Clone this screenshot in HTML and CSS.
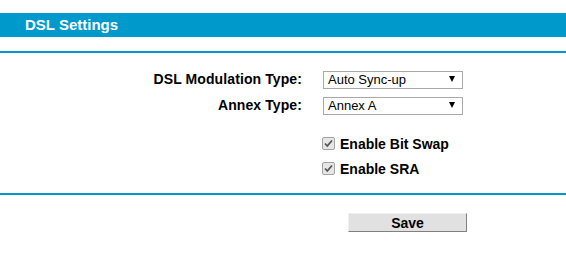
FILE: index.html
```html
<!DOCTYPE html>
<html lang="en">
<head>
  <meta charset="UTF-8">
  <title>DSL Settings</title>
  <link rel="stylesheet" href="styles.css">
</head>
<body>
  <div class="title-bar">DSL Settings</div>
  <div class="divider"></div>

  <form class="settings">
    <label class="field-label" for="modulation">DSL Modulation Type:</label>
    <div class="select-wrap">
      <select id="modulation">
        <option>Auto Sync-up</option>
        <option>ADSL2+</option>
        <option>ADSL2</option>
        <option>G.DMT</option>
        <option>T1.413</option>
      </select>
    </div>

    <label class="field-label" for="annex">Annex Type:</label>
    <div class="select-wrap">
      <select id="annex">
        <option>Annex A</option>
        <option>Annex L</option>
        <option>Annex M</option>
      </select>
    </div>

    <div class="check-list">
      <label class="check-row">
        <span class="check-box">
          <svg width="11" height="11" viewBox="0 0 11 11"><path d="M2 5.5 L4.3 8 L9 2.5" fill="none" stroke="#555" stroke-width="1.8"/></svg>
        </span>
        Enable Bit Swap
      </label>
      <label class="check-row">
        <span class="check-box">
          <svg width="11" height="11" viewBox="0 0 11 11"><path d="M2 5.5 L4.3 8 L9 2.5" fill="none" stroke="#555" stroke-width="1.8"/></svg>
        </span>
        Enable SRA
      </label>
    </div>
  </form>

  <div class="divider bottom"></div>

  <div class="actions">
    <button type="button" class="save-btn">Save</button>
  </div>
</body>
</html>
```

FILE: styles.css
```css
body {
  margin: 0;
  font-family: "Liberation Sans", Arial, sans-serif;
  color: #000;
  background: #fff;
}

.title-bar {
  margin-top: 13px;
  height: 24px;
  line-height: 24px;
  padding-left: 25px;
  background-color: #0099cc;
  color: #fff;
  font-size: 15px;
  font-weight: bold;
}

.divider {
  margin-top: 14px;
  height: 2px;
  background-color: #0099cc;
}

.divider.bottom {
  margin-top: 12px;
}

.settings {
  display: grid;
  grid-template-columns: 302px 140px;
  column-gap: 21px;
  row-gap: 8px;
  align-items: center;
  padding-top: 17px;
}

.field-label {
  text-align: right;
  font-size: 14px;
  font-weight: bold;
  letter-spacing: 0.1px;
}

.select-wrap {
  position: relative;
  height: 18px;
}

.select-wrap select {
  appearance: none;
  -webkit-appearance: none;
  box-sizing: border-box;
  width: 140px;
  height: 18px;
  margin: 0;
  padding: 0 0 0 4px;
  border: 1px solid #a9a9a9;
  border-radius: 0;
  background: #fff;
  font-family: "Liberation Sans", Arial, sans-serif;
  font-size: 13px;
  color: #000;
}

.select-wrap::after {
  content: "";
  position: absolute;
  right: 8px;
  top: 6px;
  border-left: 3px solid transparent;
  border-right: 3px solid transparent;
  border-top: 6px solid #000;
  pointer-events: none;
}

.check-list {
  grid-column: 2;
  margin-top: 9px;
}

.check-row {
  display: flex;
  align-items: center;
  height: 25px;
  font-size: 14px;
  font-weight: bold;
  white-space: nowrap;
}

.check-box {
  box-sizing: border-box;
  display: inline-flex;
  align-items: center;
  justify-content: center;
  width: 13px;
  height: 13px;
  margin-left: -1px;
  margin-right: 5px;
  border: 1px solid #a3a3a3;
  border-radius: 2px;
  background: #e6e6e6;
}

.actions {
  padding: 18px 0 0 348px;
}

.save-btn {
  width: 119px;
  height: 19px;
  padding: 0;
  border: 1px solid;
  border-color: #f0f0f0 #808080 #808080 #f0f0f0;
  background-color: #e1e1e1;
  font-family: "Liberation Sans", Arial, sans-serif;
  font-size: 14px;
  font-weight: bold;
  color: #000;
}
```
